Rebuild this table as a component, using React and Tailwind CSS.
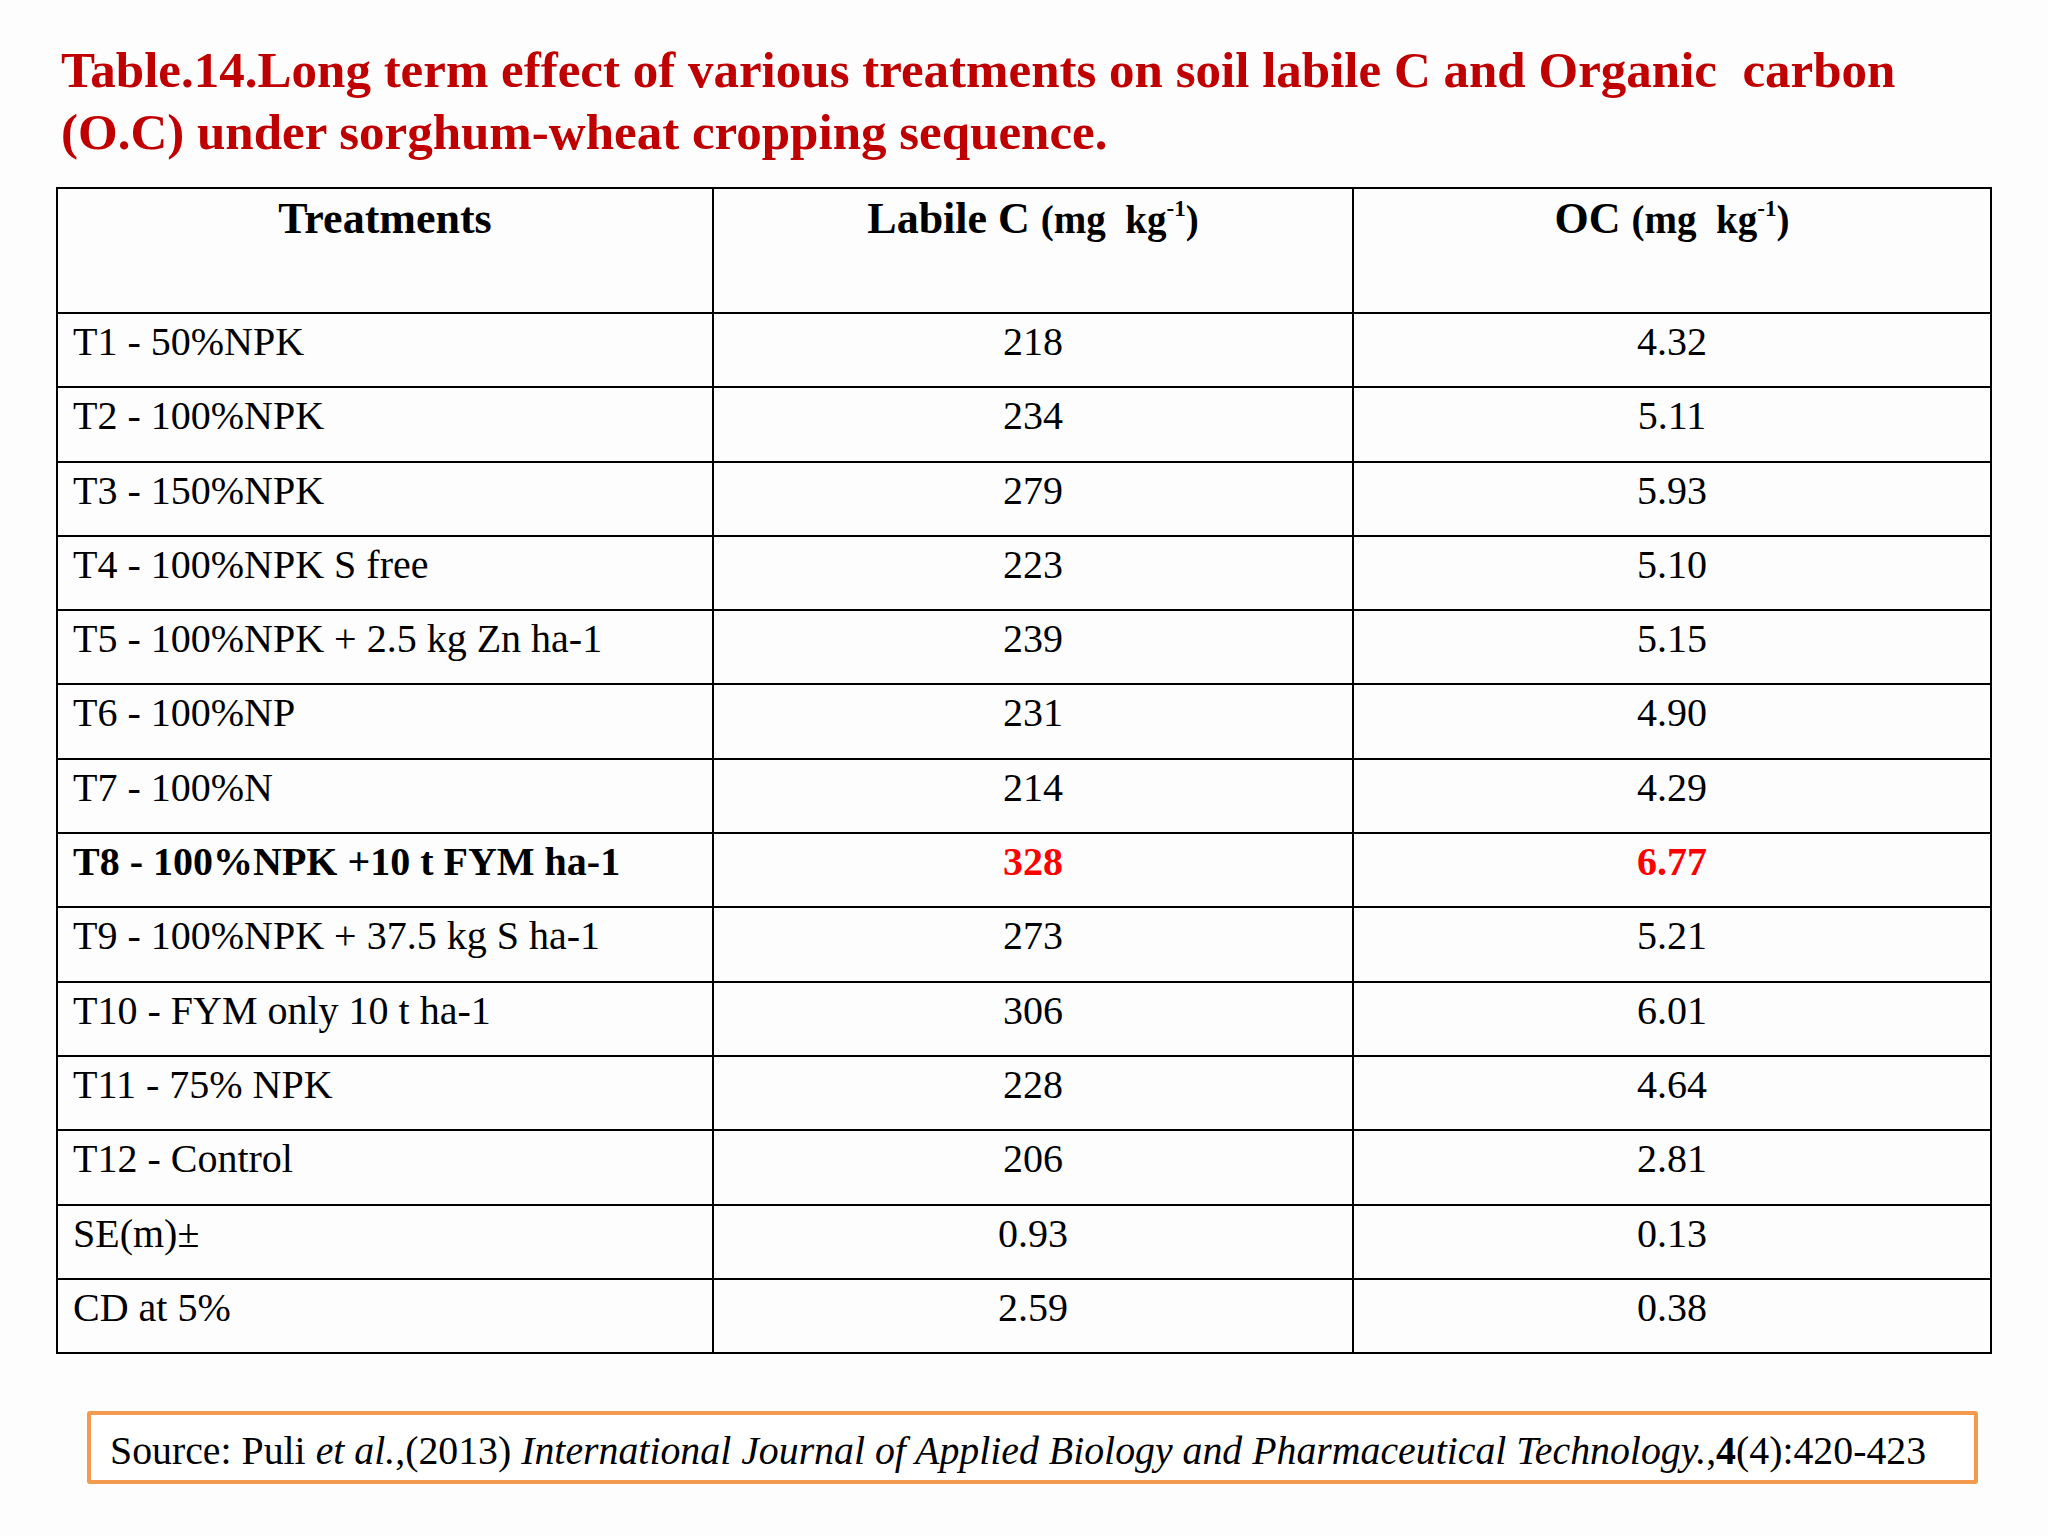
const ROWS = [
  ["T1 - 50%NPK", "218", "4.32"],
  ["T2 - 100%NPK", "234", "5.11"],
  ["T3 - 150%NPK", "279", "5.93"],
  ["T4 - 100%NPK S free", "223", "5.10"],
  ["T5 - 100%NPK + 2.5 kg Zn ha-1", "239", "5.15"],
  ["T6 - 100%NP", "231", "4.90"],
  ["T7 - 100%N", "214", "4.29"],
  ["T8 - 100%NPK +10 t FYM ha-1", "328", "6.77", true],
  ["T9 - 100%NPK + 37.5 kg S ha-1", "273", "5.21"],
  ["T10 - FYM only 10 t ha-1", "306", "6.01"],
  ["T11 - 75% NPK", "228", "4.64"],
  ["T12 - Control", "206", "2.81"],
  ["SE(m)±", "0.93", "0.13"],
  ["CD at 5%", "2.59", "0.38"],
];

function Unit() {
  return (
    <span className="text-[39px]">
      (mg{"\u00a0\u00a0"}kg<sup className="text-[23px] top-[-0.75em]">-1</sup>)
    </span>
  );
}

export default function App() {
  return (
    <div className="w-[2048px] h-[1536px] overflow-hidden bg-[#fdfdfe] font-['Liberation_Serif',serif] text-black pt-[39px]">
      {/* title */}
      <h1 className="ml-[61px] text-[51px] leading-[62px] font-bold text-[#c00000] whitespace-nowrap">
        Table.14.Long term effect of various treatments on soil labile C and Organic{"\u00a0\u00a0"}carbon
        <br />
        (O.C) under sorghum-wheat cropping sequence.
      </h1>

      {/* table */}
      <div className="ml-[56px] mt-[24px] w-[1936px] border-2 border-black">
        <div className="grid grid-cols-[654px_640px_638px] h-[123px] text-[44px] leading-[50px] font-bold">
          <div className="text-center pt-[5px]">Treatments</div>
          <div className="text-center pt-[5px] border-l-2 border-black">
            Labile C <Unit />
          </div>
          <div className="text-center pt-[5px] border-l-2 border-black">
            OC <Unit />
          </div>
        </div>
        {ROWS.map(([name, lab, oc, hi]) => (
          <div
            key={name}
            className="grid grid-cols-[654px_640px_638px] h-[74.3px] border-t-2 border-black text-[40px] leading-[46px]"
          >
            <div className={`pl-[15px] pt-[5px] whitespace-nowrap ${hi ? "font-bold" : ""}`}>{name}</div>
            <div className={`text-center pt-[5px] border-l-2 border-black ${hi ? "font-bold text-[#ff0000]" : ""}`}>{lab}</div>
            <div className={`text-center pt-[5px] border-l-2 border-black ${hi ? "font-bold text-[#ff0000]" : ""}`}>{oc}</div>
          </div>
        ))}
      </div>

      {/* source */}
      <div className="ml-[87px] mt-[57px] w-[1891px] h-[73px] border-4 border-[#f39a4e] rounded-[3px] bg-white pl-[19px] pt-[13px] text-[39.8px] leading-[46px] whitespace-nowrap">
        Source: Puli <i>et al.</i>,(2013) <i>International Journal of Applied Biology and Pharmaceutical Technology.</i>,
        <b>4</b>(4):420-423
      </div>
    </div>
  );
}
